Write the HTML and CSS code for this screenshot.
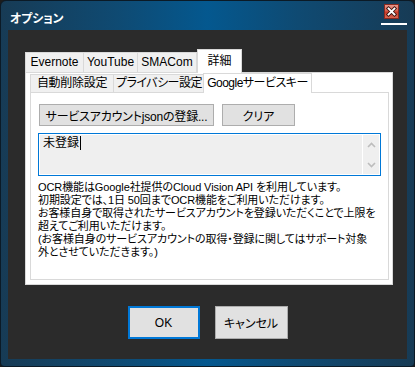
FILE: index.html
```html
<!DOCTYPE html>
<html lang="ja">
<head>
<meta charset="utf-8">
<title>オプション</title>
<link rel="stylesheet" href="styles.css">
</head>
<body>
<div class="window">
  <div class="titlebar">
    <span class="title">オプション</span>
    <div class="close">
      <svg class="close-btn" width="15" height="15" viewBox="0 0 15 15">
        <defs>
          <linearGradient id="cg" x1="0" y1="0" x2="0" y2="1">
            <stop offset="0" stop-color="#e99a8e"/>
            <stop offset="0.45" stop-color="#d9604f"/>
            <stop offset="0.55" stop-color="#c63a28"/>
            <stop offset="1" stop-color="#d96a55"/>
          </linearGradient>
        </defs>
        <rect x="0.5" y="0.5" width="14" height="14" fill="url(#cg)" stroke="#8a2a20"/>
        <path d="M4.5 4.5 L10.5 10.5 M10.5 4.5 L4.5 10.5" stroke="#3a1410" stroke-width="3.6" stroke-linecap="square"/>
        <path d="M4.5 4.5 L10.5 10.5 M10.5 4.5 L4.5 10.5" stroke="#ffffff" stroke-width="1.8" stroke-linecap="square"/>
      </svg>
      <div class="close-line"></div>
    </div>
  </div>
  <div class="client">
    <div class="tabctl">
      <div class="tabs">
        <div class="tab t-evernote">Evernote</div>
        <div class="tab t-youtube">YouTube</div>
        <div class="tab t-smacom">SMACom</div>
        <div class="tab sel t-detail">詳細</div>
      </div>
      <div class="page">
        <div class="tabs inner">
          <div class="tab t-auto">自動削除設定</div>
          <div class="tab t-privacy">プライバシー設定</div>
          <div class="tab sel t-google">Googleサービスキー</div>
        </div>
        <div class="inpage">
          <div class="btnrow">
            <button class="btn wide">サービスアカウントjsonの登録...</button>
            <button class="btn clear">クリア</button>
          </div>
          <div class="textbox">
            <div class="tb-text">未登録<span class="caret"></span></div>
            <div class="tb-scroll">
              <svg width="9" height="6" viewBox="0 0 9 6"><path d="M1 5 L4.5 1.5 L8 5" fill="none" stroke="#bdbdbd" stroke-width="1.6"/></svg>
              <svg width="9" height="6" viewBox="0 0 9 6"><path d="M1 1 L4.5 4.5 L8 1" fill="none" stroke="#bdbdbd" stroke-width="1.6"/></svg>
            </div>
          </div>
          <p class="note">OCR機能はGoogle社提供のCloud Vision API を利用しています。<br>初期設定では、1日 50回までOCR機能をご利用いただけます。<br>お客様自身で取得されたサービスアカウントを登録いただくことで上限を<br>超えてご利用いただけます。<br>(お客様自身のサービスアカウントの取得・登録に関してはサポート対象<br>外とさせていただきます。)</p>
        </div>
      </div>
    </div>
    <div class="footer">
      <button class="btn dlg ok">OK</button>
      <button class="btn dlg">キャンセル</button>
    </div>
  </div>
</div>
</body>
</html>
```

FILE: styles.css
```css
* { box-sizing: border-box; }
html, body { margin: 0; padding: 0; }
body {
  width: 415px;
  height: 367px;
  background: #1c1c1c;
  font-family: "Liberation Sans", "Noto Sans CJK JP", sans-serif;
  font-size: 12px;
  font-feature-settings: "palt";
  color: #000;
}
.window {
  width: 415px;
  height: 367px;
  border: 1px solid #0b1a26;
  border-radius: 6px 6px 4px 4px;
  background: linear-gradient(90deg, #173b55 0%, #0f4a72 28%, #04588f 50%, #0f4a72 72%, #173b55 100%);
  display: flex;
  flex-direction: column;
  overflow: hidden;
}
.titlebar {
  height: 29px;
  display: flex;
  justify-content: space-between;
  padding: 0 7px 0 9px;
}
.title {
  color: #fff;
  font-family: "Noto Sans CJK JP", sans-serif;
  font-weight: bold;
  font-size: 12px;
  letter-spacing: -0.2px;
  line-height: 16px;
  margin-top: 9px;
}
.close {
  width: 26px;
  display: flex;
  flex-direction: column;
  padding-top: 3px;
}
.close-btn { display: block; margin-left: 3px; }
.close-line { height: 2px; background: #fff; margin-top: 4px; }
.client {
  margin: 0 7px;
  height: 329px;
  background: #2b2b2b;
  padding-top: 19px;
  display: flex;
  flex-direction: column;
}
.tabctl { margin: 0 14px 0 17px; }
.tabs {
  display: flex;
  align-items: flex-end;
  height: 23px;
}
.tab {
  height: 20px;
  padding: 0;
  border: 1px solid #d9d9d9;
  border-bottom: none;
  background: #f0f0f0;
  line-height: 19px;
  text-align: center;
  white-space: nowrap;
}
.tab + .tab { margin-left: -1px; }
.tab.sel {
  height: 24px;
  line-height: 22px;
  background: #fff;
  margin-bottom: -1px;
  margin-left: 0;
  position: relative;
  z-index: 1;
}
.t-evernote { width: 59px; }
.t-youtube { width: 55px; }
.t-smacom { width: 60px; }
.t-detail { width: 45px; }
.page {
  border: 1px solid #d9d9d9;
  background: #fff;
  height: 213px;
  padding: 0 3px 4px 4px;
  display: flex;
  flex-direction: column;
}
.tabs.inner { height: 19px; }
.tabs.inner .tab { height: 18px; line-height: 17px; background: #f0f0f0; }
.tabs.inner .tab.sel {
  height: 20px;
  line-height: 19px;
  background: #fff;
  margin-left: -2px;
}
.t-auto { width: 84px; letter-spacing: -0.3px; }
.t-privacy { width: 92px; letter-spacing: -0.5px; }
.t-google { width: 109px; letter-spacing: -0.5px; }
.inpage {
  flex: 1;
  border: 1px solid #d9d9d9;
  padding: 11px 0 0 8px;
}
.btnrow { display: flex; gap: 8px; }
.btn {
  height: 22px;
  border: 1px solid #adadad;
  background: #e1e1e1;
  font: inherit;
  font-feature-settings: "palt";
  color: #000;
  padding: 0;
}
.btn.wide { width: 175px; letter-spacing: -0.2px; }
.btn.clear { width: 73px; }
.textbox {
  margin: 7px 0 0 -1px;
  width: 343px;
  height: 43px;
  border: 1px solid #0078d7;
  box-shadow: inset 0 0 0 1px #fff;
  background: #efefef;
  display: flex;
}
.tb-text {
  flex: 1;
  padding: 1px 0 0 4px;
  line-height: 16px;
}
.caret {
  display: inline-block;
  width: 1px;
  height: 14px;
  background: #000;
  vertical-align: -3px;
  margin-left: 1px;
}
.tb-scroll {
  width: 18px;
  border-left: 1px solid #fff;
  display: flex;
  flex-direction: column;
  justify-content: space-between;
  align-items: center;
  padding: 8px 0 7px;
}
.tb-scroll svg { display: block; }
.note {
  margin: 5px 0 0 -1px;
  font-size: 11px;
  line-height: 13px;
  letter-spacing: -0.1px;
  white-space: nowrap;
}
.footer {
  display: flex;
  justify-content: center;
  gap: 15px;
  margin-top: 21px;
}
.btn.dlg { height: 33px; width: 73px; }
.btn.ok { width: 72px; border: 2px solid #0078d7; }
```
